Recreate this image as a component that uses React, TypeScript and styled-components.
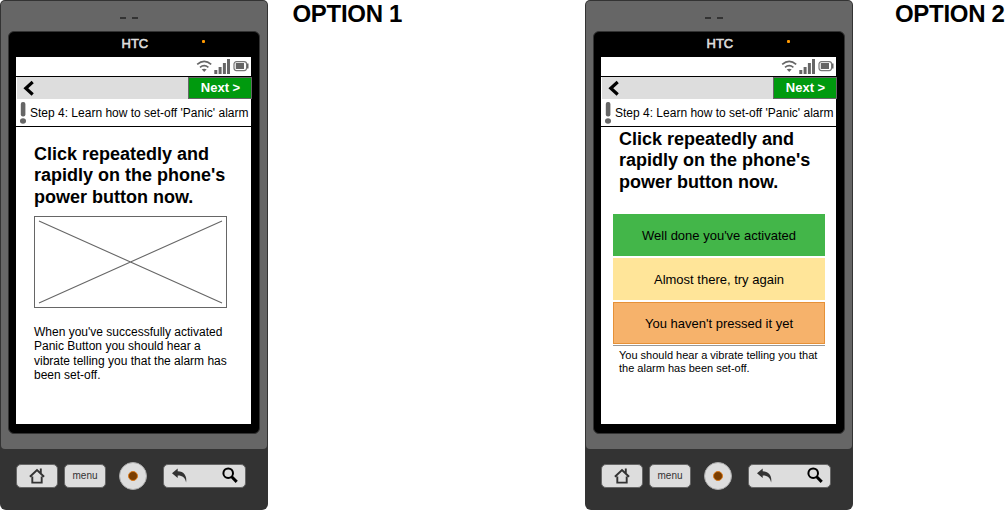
import React from "react";
import styled, { createGlobalStyle } from "styled-components";

const GlobalStyle = createGlobalStyle`
  * { box-sizing: border-box; }
  body {
    margin: 0;
    background: #fff;
    color: #000;
    font-family: "Liberation Sans", Arial, sans-serif;
    overflow: hidden;
  }
  h1, h2, p { margin: 0; }
  svg { display: block; flex: none; }
`;

const Board = styled.main`
  display: flex;
  align-items: flex-start;
  width: 1007px;
  height: 510px;
  overflow: hidden;
`;

const Option = styled.section<{ $width: number; $gap: number }>`
  display: flex;
  flex: none;
  align-items: flex-start;
  width: ${(p) => p.$width}px;
  gap: ${(p) => p.$gap}px;
`;

const OptionTitle = styled.h1`
  font-size: 24px;
  line-height: 28px;
  white-space: nowrap;
  letter-spacing: -0.3px;
`;

const Device = styled.div`
  display: flex;
  flex: none;
  flex-direction: column;
  width: 268px;
  height: 510px;
  background: #333;
  border-radius: 5px 5px 6px 6px;
`;

const Shell = styled.div`
  display: flex;
  flex-direction: column;
  align-items: center;
  height: 448px;
  margin: 1px 1px 0;
  padding-top: 16px;
  background: #666;
  border-radius: 4px;
`;

const Speaker = styled.div`
  display: flex;
  gap: 6px;
  height: 14px;
  margin-right: 11px;
`;

const SpeakerSlot = styled.i`
  width: 6px;
  height: 2px;
  background: #333;
`;

const Bezel = styled.div`
  width: 252px;
  height: 403px;
  padding: 0 7px;
  background: #000;
  border: 1px solid #333;
  border-radius: 6px;
`;

const Brand = styled.div`
  display: flex;
  align-items: flex-start;
  justify-content: space-between;
  height: 25px;
  padding: 4px 47px 0 105.5px;
  color: #ddd;
  font-size: 13px;
  line-height: 15px;
  -webkit-text-stroke: 0.6px #ddd;
`;

const Led = styled.i`
  width: 3px;
  height: 3px;
  margin-top: 4px;
  background: #f90;
  border-radius: 1px;
`;

const Screen = styled.div`
  display: flex;
  flex-direction: column;
  width: 236px;
  height: 367px;
  background: linear-gradient(#fff, #fff) 0 0 / 235px 100% no-repeat;
`;

const StatusBar = styled.div`
  display: flex;
  justify-content: flex-end;
  width: 235px;
  height: 20px;
  border-bottom: 1px solid #000;
`;

const NavBar = styled.div`
  display: flex;
  justify-content: space-between;
  height: 22px;
  margin-left: 1px;
  background: #ddd;
`;

const NextButton = styled.button`
  width: 64px;
  height: 22px;
  padding: 0 0 1px 1px;
  background: #009a0e;
  border: 1px solid #666;
  color: #fff;
  font: bold 13px/18px "Liberation Sans", Arial, sans-serif;
`;

const StepRow = styled.div`
  display: flex;
  width: 235px;
  height: 28px;
  border-bottom: 1px solid #000;
  font-size: 12px;
  line-height: 28px;
  white-space: nowrap;
`;

const Instruction = styled.h2<{ $top: number }>`
  width: 217px;
  margin: ${(p) => p.$top}px 0 0 18px;
  font-size: 18px;
  line-height: 21.5px;
`;

const Placeholder = styled.div`
  width: 193px;
  height: 92px;
  margin: 7.5px 0 0 18px;
  border: 1px solid #666;
`;

const Note = styled.p<{ $size: number; $leading: number; $top: number }>`
  width: 217px;
  margin: ${(p) => p.$top}px 0 0 18px;
  font-size: ${(p) => p.$size}px;
  line-height: ${(p) => p.$leading}px;
`;

const StatusList = styled.div`
  display: flex;
  flex-direction: column;
  gap: 2px;
  width: 212px;
  margin: 20.5px 0 0 12px;
  padding-bottom: 1px;
  border-bottom: 1px solid #999;
`;

const StatusItem = styled.div<{ $fill: string; $edge: string }>`
  height: 42px;
  background: ${(p) => p.$fill};
  border: 1px solid ${(p) => p.$edge};
  font-size: 13px;
  line-height: 41px;
  text-align: center;
`;

const Keys = styled.div`
  display: flex;
  align-items: center;
  height: 54px;
  padding-left: 16px;
`;

const Key = styled.div<{ $width: number; $gap: number }>`
  display: flex;
  align-items: center;
  justify-content: center;
  width: ${(p) => p.$width}px;
  height: 24px;
  margin-right: ${(p) => p.$gap}px;
  background: #ddd;
  border: 1px solid #666;
  border-radius: 5px;
  color: #333;
  font-size: 10px;
  line-height: 20px;
`;

const Trackball = styled.div`
  display: flex;
  align-items: center;
  justify-content: center;
  width: 28px;
  height: 28px;
  margin-right: 16px;
  background: #ddd;
  border: 1px solid #aaa;
  border-radius: 50%;
`;

const TrackballCore = styled.i`
  width: 10px;
  height: 10px;
  background: #7a3d00;
  border: 1px solid #d97a1c;
  border-radius: 50%;
`;

const StatusIcons = () => (
  <svg width="55" height="19" fill="#666">
    <g fill="none" stroke="#666" strokeWidth="1.7">
      <path d="M1.2 7.3Q8.2 1.5 15.2 7.3" />
      <path d="M4 10.3Q8.2 7 12.4 10.3" />
    </g>
    <path d="M5.7 12.3Q8.2 11 10.7 12.3L8.2 15Z" />
    <path d="M18.3 13h3v4h-3zM22.6 10h3v7h-3zM26.9 6h3v11h-3zM31 2h3v15h-3z" />
    <rect x="38" y="4.6" width="12.6" height="9" rx="2.5" fill="none" stroke="#777" strokeWidth="1.2" />
    <path d="M39.8 6h8.2v6h-8.2zM51 6.5h1.5v5H51z" />
  </svg>
);

const BackChevron = () => (
  <svg width="20" height="22">
    <path d="M15.7 5L8.8 11.2l6.9 6.3" fill="none" stroke="#000" strokeWidth="3.2" />
  </svg>
);

const AlertMark = () => (
  <svg width="14" height="27" fill="#666">
    <rect x="4.8" y="3" width="4.6" height="14.6" rx="2" />
    <ellipse cx="7" cy="22" rx="3" ry="2.7" />
  </svg>
);

const HomeIcon = () => (
  <svg width="16" height="18" fill="none" stroke="#333" strokeWidth="1.9">
    <path d="M3.3 9.5V15.6H12.7V9.5M.9 9.8L8 3 15.1 9.8M11.8 1.6v4.6" />
  </svg>
);

const SearchKeyIcons = () => (
  <svg width="81" height="22">
    <path d="M8 8.2L13.7 3.4v2.8c6.2 0 9.6 4.8 8.4 11.4-.7-4.7-3.7-7.2-8.4-7.1v2.5Z" fill="#333" />
    <g fill="none" stroke="#000">
      <circle cx="64.2" cy="8.2" r="4.8" strokeWidth="2" />
      <path d="M67.7 11.7l5 5.2" strokeWidth="3" />
    </g>
  </svg>
);

const CrossLines = () => (
  <svg width="191" height="90" stroke="#666" strokeWidth="1.1">
    <path d="M4 4L187 86M4 86L187 4" />
  </svg>
);

function Phone({ children }: { children: React.ReactNode }) {
  return (
    <Device>
      <Shell>
        <Speaker><SpeakerSlot /><SpeakerSlot /></Speaker>
        <Bezel>
          <Brand><span>HTC</span><Led /></Brand>
          <Screen>
            <StatusBar><StatusIcons /></StatusBar>
            <NavBar><BackChevron /><NextButton>Next &gt;</NextButton></NavBar>
            <StepRow><AlertMark />Step 4: Learn how to set-off 'Panic' alarm</StepRow>
            {children}
          </Screen>
        </Bezel>
      </Shell>
      <Keys>
        <Key $width={42} $gap={6}><HomeIcon /></Key>
        <Key $width={42} $gap={13}>menu</Key>
        <Trackball><TrackballCore /></Trackball>
        <Key $width={83} $gap={0}><SearchKeyIcons /></Key>
      </Keys>
    </Device>
  );
}

const heading = <>Click repeatedly and<br />rapidly on the phone's<br />power button now.</>;

export default function App() {
  return (
    <>
      <GlobalStyle />
      <Board>
        <Option $width={585} $gap={24.5}>
          <Phone>
            <Instruction $top={16.5}>{heading}</Instruction>
            <Placeholder><CrossLines /></Placeholder>
            <Note $size={12} $leading={14.6} $top={17}>
              When you've successfully activated<br />Panic Button you should hear a<br />
              vibrate telling you that the alarm has<br />been set-off.
            </Note>
          </Phone>
          <OptionTitle>OPTION 1</OptionTitle>
        </Option>
        <Option $width={422} $gap={42}>
          <Phone>
            <Instruction $top={1.5}>{heading}</Instruction>
            <StatusList>
              <StatusItem $fill="#43b649" $edge="#43b649">Well done you've activated</StatusItem>
              <StatusItem $fill="#ffe599" $edge="#ffe599">Almost there, try again</StatusItem>
              <StatusItem $fill="#f6b26b" $edge="#e69138">You haven't pressed it yet</StatusItem>
            </StatusList>
            <Note $size={11} $leading={13} $top={3}>
              You should hear a vibrate telling you that<br />the alarm has been set-off.
            </Note>
          </Phone>
          <OptionTitle>OPTION 2</OptionTitle>
        </Option>
      </Board>
    </>
  );
}
